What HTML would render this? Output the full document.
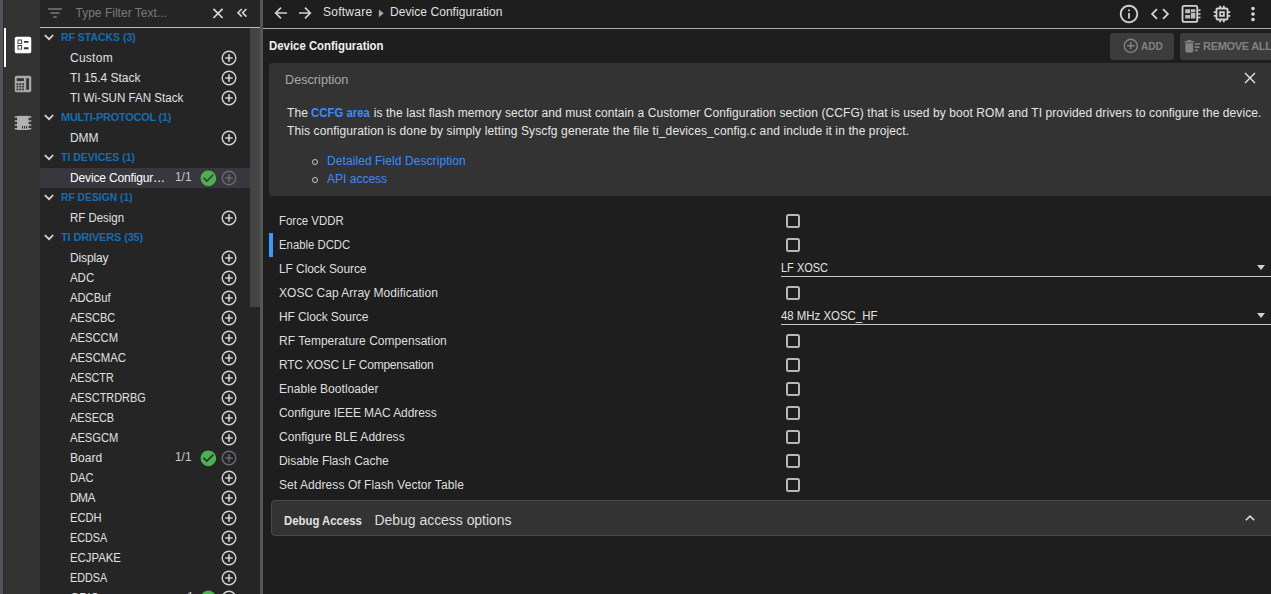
<!DOCTYPE html>
<html lang="en"><head><meta charset="utf-8"><title>Device Configuration</title>
<style>
*{box-sizing:border-box;margin:0;padding:0}
html,body{width:1271px;height:594px;overflow:hidden;background:#1e1e1e}
body{font-family:"Liberation Sans",sans-serif;font-size:12px;color:#e0e0e0;position:relative}
.abs{position:absolute}
#strip{left:0;top:0;width:3px;height:594px;background:#505458}
#strip2{left:3px;top:0;width:1px;height:594px;background:#2b2b2b}
#ibar{left:4px;top:0;width:36px;height:594px;background:#333}
#ind{left:4px;top:28px;width:2px;height:39px;background:#fff}
#nav{left:40px;top:0;width:220px;height:594px;background:#252526;overflow:hidden}
#navhead{left:0;top:0;width:220px;height:28px;border-bottom:1px solid #bdbdbd}
#filtertxt{left:35.5px;top:0;line-height:26px;color:#7a7a7a;font-size:12px;white-space:nowrap}
#tree{left:0;top:28px;width:210px}
.row{height:20px;line-height:20px;position:relative;white-space:nowrap}
.row.sel{background:#37373d}
.cl{position:absolute;left:21px;top:-1px;font-weight:bold;font-size:11px;color:#186cb0}
.il{position:absolute;left:30px;top:0;color:#e0e0e0}
.il.w{color:#fff}
.chev{position:absolute;left:4.3px;top:6.3px;width:10px;height:7px}
.plus{position:absolute;left:181px;top:1.9px;width:16px;height:16px;color:#d4d4d4}
.dim .plus{color:#6a6a6e}
.ok{position:absolute;left:158.74px;top:0.54px;width:18.72px;height:18.72px}
.cnt{position:absolute;left:135.200px;top:-1.5px;color:#c8c8c8}
#thumb{left:210px;top:28px;width:10px;height:279px;background:#444}
#divider{left:260px;top:0;width:3px;height:594px;background:#555}
#main{left:263px;top:0;width:1008px;height:594px;background:#1e1e1e;overflow:hidden}
#topbar{left:0;top:0;width:1008px;height:29px;border-bottom:1px solid #ababab}
.crumb{top:0;line-height:24px;white-space:nowrap;color:#e0e0e0}
#title{left:6px;top:33px;line-height:26px;font-weight:bold;color:#f0f0f0;white-space:nowrap}
.btn{top:33px;height:26.8px;background:#3c3c3c;border-radius:3px;color:#828282;font-weight:bold;font-size:11px;line-height:26px;white-space:nowrap}
#card{left:6px;top:63px;width:1010px;height:133px;background:#333;border-radius:4px}
#desc{left:16px;top:5px;line-height:24px;color:#a8a8a8}
.p{left:18px;white-space:nowrap;line-height:18px;color:#e6e6e6}
a{color:#3d8bff;text-decoration:none}
.li{left:58px;white-space:nowrap;line-height:18px}
.bul{left:42.800px;width:6px;height:6px;border:1.300px solid #c8c8c8;border-radius:50%}
#fields{left:6px;top:209px;width:1002px}
.f{height:24px;line-height:24px;position:relative;white-space:nowrap}
.fl{position:absolute;left:10px;top:0;color:#dedede}
.mark{position:absolute;left:0;top:0;width:4px;height:24px;background:#3b99fc}
.cb{position:absolute;left:517px;top:5px;width:14px;height:14px;border:2px solid #b8b8b8;border-radius:2.5px}
.selbox{position:absolute;left:512px;top:0;width:496px;height:20px;border-bottom:1px solid #c8c8c8}
.selbox span{position:absolute;left:0;top:-1px;color:#e4e4e4}
.tri{position:absolute;left:476px;top:7.800px;width:0;height:0;border-left:4.900px solid transparent;border-right:4.900px solid transparent;border-top:5.300px solid #d0d0d0}
#dbg{left:8px;top:500px;width:1010px;height:36px;background:#333;border:1px solid #4a4a4a;border-radius:4px}
</style></head><body>
<div id="strip" class="abs"></div><div id="strip2" class="abs"></div>
<div id="ibar" class="abs"></div>
<div id="ind" class="abs"></div>
<!-- icon bar icons -->
<svg class="abs" style="left:12px;top:33.75px;width:22px;height:22px" viewBox="0 0 24 24"><path fill="#fff" fill-rule="evenodd" d="M13 9.5h5v-2h-5v2zm0 7h5v-2h-5v2zm6 4.500H5c-1.100 0-2-.9-2-2V5c0-1.100.9-2 2-2h14c1.100 0 2 .9 2 2v14c0 1.100-.9 2-2 2zM6 11h5V6H6v5zm1-4h3v3H7V7zm-1 10h5v-5H6v5zm1-4h3v3H7v-3z"/></svg>
<svg class="abs" style="left:12px;top:73px;width:22px;height:22px" viewBox="0 0 24 24"><path fill="#a8a8a8" fill-rule="evenodd" d="M5 3h14a2 2 0 0 1 2 2v14a2 2 0 0 1-2 2H5a2 2 0 0 1-2-2V5a2 2 0 0 1 2-2zM5.200 5.600v3h7.800v-3zM15.500 5.600v12.800h3V5.600zM5 11.200v1.900h2v-1.900zM8 11.200v1.900h2v-1.900zM11 11.200v1.900h2v-1.900zM5 14v1.900h2V14zM8 14v1.900h2V14zM11 14v1.900h2V14zM5 16.800v1.900h2v-1.900zM8 16.800v1.900h2v-1.900zM11 16.800v1.900h2v-1.900z"/></svg>
<svg class="abs" style="left:12px;top:112px;width:22px;height:22px" viewBox="0 0 24 24"><path fill="#b2b2b2" d="M5.600 4.200h12.500v15.400H5.600z"/><path stroke="#b2b2b2" stroke-width="1.600" d="M3 5.500h18M3 9.800h18M3 14.100h18M3 18.200h18"/><path stroke="#2a2a2a" stroke-width="1.100" d="M11.500 15.300v2.800M13.750 15.300v2.800M15.900 15.300v2.800"/></svg>

<div id="nav" class="abs">
 <div id="navhead" class="abs"></div>
 <svg class="abs" style="left:8px;top:7.500px;width:14px;height:10px" viewBox="0 0 14 10"><path stroke="#7a7a7a" stroke-width="1.300" d="M0 1h14M2.500 5h9M5.300 9h3.400"/></svg>
 <div id="filtertxt" class="abs"><span id="t46" style="letter-spacing:0.011px;margin-left:0.00px">Type Filter Text...</span></div>
 <svg class="abs" style="left:172px;top:7.500px;width:12px;height:11px" viewBox="0 0 12 11"><path stroke="#d8d8d8" stroke-width="1.700" fill="none" d="M1.400 0.800l9.200 9.200M10.600 0.800l-9.200 9.200"/></svg>
 <svg class="abs" style="left:196px;top:8.200px;width:12px;height:10px" viewBox="0 0 12 10"><path stroke="#d8d8d8" stroke-width="1.600" fill="none" d="M5.800 1L2 4.800l3.800 3.800M10.400 1L6.600 4.800l3.800 3.800"/></svg>
 <div id="tree" class="abs">
<div class="row cat"><svg class="chev" viewBox="0 0 10 7"><path d="M0.800 1l4.200 4.200L9.200 1" fill="none" stroke="#d8d8d8" stroke-width="1.700"/></svg><span id="t1" class="cl" style="display:inline-block;transform-origin:0 50%;transform:scaleX(0.9513);margin-left:0.00px">RF STACKS (3)</span></div>
<div class="row"><span id="t2" class="il" style="letter-spacing:0.260px;margin-left:0.00px">Custom</span><svg class="plus" viewBox="0 0 16 16"><circle cx="8" cy="8" r="6.800" fill="none" stroke="currentColor" stroke-width="1.400"/><path d="M8 4.300v7.400M4.300 8h7.400" stroke="currentColor" stroke-width="1.600" fill="none"/></svg></div>
<div class="row"><span id="t3" class="il" style="letter-spacing:-0.017px;margin-left:0.00px">TI 15.4 Stack</span><svg class="plus" viewBox="0 0 16 16"><circle cx="8" cy="8" r="6.800" fill="none" stroke="currentColor" stroke-width="1.400"/><path d="M8 4.300v7.400M4.300 8h7.400" stroke="currentColor" stroke-width="1.600" fill="none"/></svg></div>
<div class="row"><span id="t4" class="il" style="display:inline-block;transform-origin:0 50%;transform:scaleX(0.9653);margin-left:0.00px">TI Wi-SUN FAN Stack</span><svg class="plus" viewBox="0 0 16 16"><circle cx="8" cy="8" r="6.800" fill="none" stroke="currentColor" stroke-width="1.400"/><path d="M8 4.300v7.400M4.300 8h7.400" stroke="currentColor" stroke-width="1.600" fill="none"/></svg></div>
<div class="row cat"><svg class="chev" viewBox="0 0 10 7"><path d="M0.800 1l4.200 4.200L9.200 1" fill="none" stroke="#d8d8d8" stroke-width="1.700"/></svg><span id="t5" class="cl" style="letter-spacing:-0.259px;margin-left:0.00px">MULTI-PROTOCOL (1)</span></div>
<div class="row"><span id="t6" class="il" style="letter-spacing:-0.050px;margin-left:0.00px">DMM</span><svg class="plus" viewBox="0 0 16 16"><circle cx="8" cy="8" r="6.800" fill="none" stroke="currentColor" stroke-width="1.400"/><path d="M8 4.300v7.400M4.300 8h7.400" stroke="currentColor" stroke-width="1.600" fill="none"/></svg></div>
<div class="row cat"><svg class="chev" viewBox="0 0 10 7"><path d="M0.800 1l4.200 4.200L9.200 1" fill="none" stroke="#d8d8d8" stroke-width="1.700"/></svg><span id="t7" class="cl" style="display:inline-block;transform-origin:0 50%;transform:scaleX(0.9533);margin-left:0.00px">TI DEVICES (1)</span></div>
<div class="row sel"><span id="t8" class="il w" style="letter-spacing:-0.153px;margin-left:0.00px">Device Configur…</span><span id="t9" class="cnt" style="display:inline-block;transform-origin:0 50%;transform:scaleX(0.9893);margin-left:0.00px">1/1</span><svg class="ok" viewBox="0 0 24 24"><path fill="#4caf50" d="M12 2C6.480 2 2 6.480 2 12s4.480 10 10 10 10-4.480 10-10S17.520 2 12 2zm-2 15l-5-5 1.410-1.410L10 14.170l7.590-7.590L19 8l-9 9z"/></svg><span class="dim"><svg class="plus" viewBox="0 0 16 16"><circle cx="8" cy="8" r="6.800" fill="none" stroke="currentColor" stroke-width="1.400"/><path d="M8 4.300v7.400M4.300 8h7.400" stroke="currentColor" stroke-width="1.600" fill="none"/></svg></span></div>
<div class="row cat"><svg class="chev" viewBox="0 0 10 7"><path d="M0.800 1l4.200 4.200L9.200 1" fill="none" stroke="#d8d8d8" stroke-width="1.700"/></svg><span id="t10" class="cl" style="display:inline-block;transform-origin:0 50%;transform:scaleX(0.9369);margin-left:0.00px">RF DESIGN (1)</span></div>
<div class="row"><span id="t11" class="il" style="display:inline-block;transform-origin:0 50%;transform:scaleX(0.9526);margin-left:0.00px">RF Design</span><svg class="plus" viewBox="0 0 16 16"><circle cx="8" cy="8" r="6.800" fill="none" stroke="currentColor" stroke-width="1.400"/><path d="M8 4.300v7.400M4.300 8h7.400" stroke="currentColor" stroke-width="1.600" fill="none"/></svg></div>
<div class="row cat"><svg class="chev" viewBox="0 0 10 7"><path d="M0.800 1l4.200 4.200L9.200 1" fill="none" stroke="#d8d8d8" stroke-width="1.700"/></svg><span id="t12" class="cl" style="letter-spacing:-0.150px;margin-left:0.00px">TI DRIVERS (35)</span></div>
<div class="row"><span id="t13" class="il" style="letter-spacing:-0.150px;margin-left:0.00px">Display</span><svg class="plus" viewBox="0 0 16 16"><circle cx="8" cy="8" r="6.800" fill="none" stroke="currentColor" stroke-width="1.400"/><path d="M8 4.300v7.400M4.300 8h7.400" stroke="currentColor" stroke-width="1.600" fill="none"/></svg></div>
<div class="row"><span id="t14" class="il" style="display:inline-block;transform-origin:0 50%;transform:scaleX(0.9525);margin-left:0.00px">ADC</span><svg class="plus" viewBox="0 0 16 16"><circle cx="8" cy="8" r="6.800" fill="none" stroke="currentColor" stroke-width="1.400"/><path d="M8 4.300v7.400M4.300 8h7.400" stroke="currentColor" stroke-width="1.600" fill="none"/></svg></div>
<div class="row"><span id="t15" class="il" style="display:inline-block;transform-origin:0 50%;transform:scaleX(0.9342);margin-left:0.00px">ADCBuf</span><svg class="plus" viewBox="0 0 16 16"><circle cx="8" cy="8" r="6.800" fill="none" stroke="currentColor" stroke-width="1.400"/><path d="M8 4.300v7.400M4.300 8h7.400" stroke="currentColor" stroke-width="1.600" fill="none"/></svg></div>
<div class="row"><span id="t16" class="il" style="display:inline-block;transform-origin:0 50%;transform:scaleX(0.9184);margin-left:0.00px">AESCBC</span><svg class="plus" viewBox="0 0 16 16"><circle cx="8" cy="8" r="6.800" fill="none" stroke="currentColor" stroke-width="1.400"/><path d="M8 4.300v7.400M4.300 8h7.400" stroke="currentColor" stroke-width="1.600" fill="none"/></svg></div>
<div class="row"><span id="t17" class="il" style="display:inline-block;transform-origin:0 50%;transform:scaleX(0.9353);margin-left:0.00px">AESCCM</span><svg class="plus" viewBox="0 0 16 16"><circle cx="8" cy="8" r="6.800" fill="none" stroke="currentColor" stroke-width="1.400"/><path d="M8 4.300v7.400M4.300 8h7.400" stroke="currentColor" stroke-width="1.600" fill="none"/></svg></div>
<div class="row"><span id="t18" class="il" style="display:inline-block;transform-origin:0 50%;transform:scaleX(0.9441);margin-left:0.00px">AESCMAC</span><svg class="plus" viewBox="0 0 16 16"><circle cx="8" cy="8" r="6.800" fill="none" stroke="currentColor" stroke-width="1.400"/><path d="M8 4.300v7.400M4.300 8h7.400" stroke="currentColor" stroke-width="1.600" fill="none"/></svg></div>
<div class="row"><span id="t19" class="il" style="display:inline-block;transform-origin:0 50%;transform:scaleX(0.8980);margin-left:0.00px">AESCTR</span><svg class="plus" viewBox="0 0 16 16"><circle cx="8" cy="8" r="6.800" fill="none" stroke="currentColor" stroke-width="1.400"/><path d="M8 4.300v7.400M4.300 8h7.400" stroke="currentColor" stroke-width="1.600" fill="none"/></svg></div>
<div class="row"><span id="t20" class="il" style="display:inline-block;transform-origin:0 50%;transform:scaleX(0.9072);margin-left:0.00px">AESCTRDRBG</span><svg class="plus" viewBox="0 0 16 16"><circle cx="8" cy="8" r="6.800" fill="none" stroke="currentColor" stroke-width="1.400"/><path d="M8 4.300v7.400M4.300 8h7.400" stroke="currentColor" stroke-width="1.600" fill="none"/></svg></div>
<div class="row"><span id="t21" class="il" style="display:inline-block;transform-origin:0 50%;transform:scaleX(0.9064);margin-left:0.00px">AESECB</span><svg class="plus" viewBox="0 0 16 16"><circle cx="8" cy="8" r="6.800" fill="none" stroke="currentColor" stroke-width="1.400"/><path d="M8 4.300v7.400M4.300 8h7.400" stroke="currentColor" stroke-width="1.600" fill="none"/></svg></div>
<div class="row"><span id="t22" class="il" style="display:inline-block;transform-origin:0 50%;transform:scaleX(0.9289);margin-left:0.00px">AESGCM</span><svg class="plus" viewBox="0 0 16 16"><circle cx="8" cy="8" r="6.800" fill="none" stroke="currentColor" stroke-width="1.400"/><path d="M8 4.300v7.400M4.300 8h7.400" stroke="currentColor" stroke-width="1.600" fill="none"/></svg></div>
<div class="row"><span id="t23" class="il" style="letter-spacing:0.025px;margin-left:0.00px">Board</span><span id="t24" class="cnt" style="display:inline-block;transform-origin:0 50%;transform:scaleX(0.9893);margin-left:0.00px">1/1</span><svg class="ok" viewBox="0 0 24 24"><path fill="#4caf50" d="M12 2C6.480 2 2 6.480 2 12s4.480 10 10 10 10-4.480 10-10S17.520 2 12 2zm-2 15l-5-5 1.410-1.410L10 14.170l7.590-7.590L19 8l-9 9z"/></svg><span class="dim"><svg class="plus" viewBox="0 0 16 16"><circle cx="8" cy="8" r="6.800" fill="none" stroke="currentColor" stroke-width="1.400"/><path d="M8 4.300v7.400M4.300 8h7.400" stroke="currentColor" stroke-width="1.600" fill="none"/></svg></span></div>
<div class="row"><span id="t25" class="il" style="display:inline-block;transform-origin:0 50%;transform:scaleX(0.9285);margin-left:0.00px">DAC</span><svg class="plus" viewBox="0 0 16 16"><circle cx="8" cy="8" r="6.800" fill="none" stroke="currentColor" stroke-width="1.400"/><path d="M8 4.300v7.400M4.300 8h7.400" stroke="currentColor" stroke-width="1.600" fill="none"/></svg></div>
<div class="row"><span id="t26" class="il" style="letter-spacing:-0.550px;margin-left:0.00px">DMA</span><svg class="plus" viewBox="0 0 16 16"><circle cx="8" cy="8" r="6.800" fill="none" stroke="currentColor" stroke-width="1.400"/><path d="M8 4.300v7.400M4.300 8h7.400" stroke="currentColor" stroke-width="1.600" fill="none"/></svg></div>
<div class="row"><span id="t27" class="il" style="display:inline-block;transform-origin:0 50%;transform:scaleX(0.9295);margin-left:0.00px">ECDH</span><svg class="plus" viewBox="0 0 16 16"><circle cx="8" cy="8" r="6.800" fill="none" stroke="currentColor" stroke-width="1.400"/><path d="M8 4.300v7.400M4.300 8h7.400" stroke="currentColor" stroke-width="1.600" fill="none"/></svg></div>
<div class="row"><span id="t28" class="il" style="display:inline-block;transform-origin:0 50%;transform:scaleX(0.9002);margin-left:0.00px">ECDSA</span><svg class="plus" viewBox="0 0 16 16"><circle cx="8" cy="8" r="6.800" fill="none" stroke="currentColor" stroke-width="1.400"/><path d="M8 4.300v7.400M4.300 8h7.400" stroke="currentColor" stroke-width="1.600" fill="none"/></svg></div>
<div class="row"><span id="t29" class="il" style="display:inline-block;transform-origin:0 50%;transform:scaleX(0.9464);margin-left:0.00px">ECJPAKE</span><svg class="plus" viewBox="0 0 16 16"><circle cx="8" cy="8" r="6.800" fill="none" stroke="currentColor" stroke-width="1.400"/><path d="M8 4.300v7.400M4.300 8h7.400" stroke="currentColor" stroke-width="1.600" fill="none"/></svg></div>
<div class="row"><span id="t30" class="il" style="display:inline-block;transform-origin:0 50%;transform:scaleX(0.9002);margin-left:0.00px">EDDSA</span><svg class="plus" viewBox="0 0 16 16"><circle cx="8" cy="8" r="6.800" fill="none" stroke="currentColor" stroke-width="1.400"/><path d="M8 4.300v7.400M4.300 8h7.400" stroke="currentColor" stroke-width="1.600" fill="none"/></svg></div>
<div class="row"><span id="t31" class="il" style="letter-spacing:-0.100px;margin-left:0.00px">GPIO</span><span class="cnt" style="left:147px">1</span><svg class="ok" viewBox="0 0 24 24"><path fill="#4caf50" d="M12 2C6.480 2 2 6.480 2 12s4.480 10 10 10 10-4.480 10-10S17.520 2 12 2zm-2 15l-5-5 1.410-1.410L10 14.170l7.590-7.590L19 8l-9 9z"/></svg><svg class="plus" viewBox="0 0 16 16"><circle cx="8" cy="8" r="6.800" fill="none" stroke="currentColor" stroke-width="1.400"/><path d="M8 4.300v7.400M4.300 8h7.400" stroke="currentColor" stroke-width="1.600" fill="none"/></svg></div>
 </div>
 <div id="thumb" class="abs"></div>
</div>
<div id="divider" class="abs"></div>

<div id="main" class="abs">
 <div id="topbar" class="abs"></div>
 <svg class="abs" style="left:11px;top:6px;width:14px;height:14px" viewBox="0 0 14 14"><path stroke="#d2d2d2" stroke-width="1.700" fill="none" d="M13 7H2M7 1.700L1.700 7 7 12.300"/></svg>
 <svg class="abs" style="left:35px;top:6px;width:14px;height:14px" viewBox="0 0 14 14"><path stroke="#d2d2d2" stroke-width="1.700" fill="none" d="M1 7h11M7 1.700L12.300 7 7 12.300"/></svg>
 <div class="abs crumb" style="left:60px"><span id="t47" style="letter-spacing:0.243px;margin-left:0.00px">Software</span></div>
 <svg class="abs" style="left:115px;top:9px;width:7px;height:9px" viewBox="0 0 7 9"><path fill="#a6a6a6" d="M0.900 0.400L5.700 4.300 0.900 8.200z"/></svg>
 <div class="abs crumb" style="left:127px"><span id="t48" style="letter-spacing:0.058px;margin-left:0.00px">Device Configuration</span></div>

 <!-- top right icons -->
 <svg class="abs" style="left:855px;top:2.900px;width:22px;height:22px" viewBox="0 0 24 24"><path fill="#d2d2d2" d="M11 17h2v-6h-2v6zm1-15C6.480 2 2 6.480 2 12s4.480 10 10 10 10-4.480 10-10S17.520 2 12 2zm0 18c-4.410 0-8-3.590-8-8s3.590-8 8-8 8 3.590 8 8-3.590 8-8 8zM11 9h2V7h-2v2z"/></svg>
 <svg class="abs" style="left:886px;top:2.900px;width:22px;height:22px" viewBox="0 0 24 24"><path fill="#d2d2d2" d="M9.400 16.600L4.800 12l4.600-4.600L8 6l-6 6 6 6 1.400-1.400zm5.200 0l4.600-4.600-4.600-4.600L16 6l6 6-6 6-1.400-1.400z"/></svg>
 <svg class="abs" style="left:917px;top:2.900px;width:22px;height:22px" viewBox="0 0 24 24"><rect x="2.750" y="3.100" width="16.100" height="17.400" rx="1.800" fill="none" stroke="#d2d2d2" stroke-width="2"/><path fill="#bcbcbc" d="M5.700 6.800h5.400v4.500H5.700zM5.700 13.200h5.400v3.700H5.700zM11.900 6.800h4.800v3.200h-4.800zM11.900 10.900h4.800v6h-4.800z"/><path stroke="#d2d2d2" stroke-width="1.600" d="M19.800 8h2.600M19.800 12h2.600M19.800 15.800h2.600"/></svg>
 <svg class="abs" style="left:948px;top:2.900px;width:22px;height:22px" viewBox="0 0 24 24"><path fill="#d2d2d2" d="M15 9H9v6h6V9zm-2 4h-2v-2h2v2zm8-2V9h-2V7c0-1.100-.9-2-2-2h-2V3h-2v2h-2V3H9v2H7c-1.100 0-2 .9-2 2v2H3v2h2v2H3v2h2v2c0 1.100.9 2 2 2h2v2h2v-2h2v2h2v-2h2c1.100 0 2-.9 2-2v-2h2v-2h-2v-2h2zm-4 6H7V7h10v10z"/></svg>
 <svg class="abs" style="left:979px;top:2.900px;width:22px;height:22px" viewBox="0 0 24 24"><path fill="#d2d2d2" d="M12 8c1.100 0 2-.9 2-2s-.9-2-2-2-2 .9-2 2 .9 2 2 2zm0 2c-1.100 0-2 .9-2 2s.9 2 2 2 2-.9 2-2-.9-2-2-2zm0 6c-1.100 0-2 .9-2 2s.9 2 2 2 2-.9 2-2-.9-2-2-2z"/></svg>

 <div id="title" class="abs"><span id="t49" style="display:inline-block;transform-origin:0 50%;transform:scaleX(0.9488);margin-left:0.00px">Device Configuration</span></div>
 <div class="abs btn" style="left:847px;width:64px"><svg class="abs" style="left:13.100px;top:5.200px;width:15.600px;height:15.600px" viewBox="0 0 16 16"><circle cx="8" cy="8" r="6.700" fill="none" stroke="#828282" stroke-width="1.400"/><path d="M8 4.400v7.200M4.400 8h7.200" stroke="#828282" stroke-width="1.500"/></svg><span class="abs" style="left:31px;top:0"><span id="t50" style="display:inline-block;transform-origin:0 50%;transform:scaleX(0.9167);margin-left:0.00px">ADD</span></span></div>
 <div class="abs btn" style="left:917px;width:110px"><svg class="abs" style="left:2.700px;top:3.900px;width:18.720px;height:18.720px" viewBox="0 0 24 24"><path fill="#828282" d="M15 16h4v2h-4zm0-8h7v2h-7zm0 4h6v2h-6zM3 18c0 1.100.9 2 2 2h6c1.100 0 2-.9 2-2V8H3v10zM14 5h-3l-1-1H6L5 5H2v2h12z"/></svg><span class="abs" style="left:23px;top:0;letter-spacing:-0.3px">REMOVE ALL</span></div>

 <div id="card" class="abs">
  <div id="desc" class="abs"><span id="t51" style="display:inline-block;transform-origin:0 50%;transform:scaleX(1.0554);margin-left:0.00px">Description</span></div>
  <svg class="abs" style="left:975px;top:9px;width:12px;height:12px" viewBox="0 0 12 12"><path stroke="#e6e6e6" stroke-width="1.400" d="M1 1l10 10M11 1L1 11"/></svg>
  <div class="abs p" style="top:41px"><span id="t52" style="letter-spacing:0.075px;margin-left:0.00px">The <a href="#"><b style="display:inline-block;transform:scaleX(0.940);transform-origin:0 50%;margin-right:-3.700px">CCFG area</b></a> is the last flash memory sector and must contain a Customer Configuration section (CCFG) that is used by boot ROM and TI provided drivers to configure the device.</span></div>
  <div class="abs p" style="top:59px"><span id="t53" style="letter-spacing:0.115px;margin-left:0.00px">This configuration is done by simply letting Syscfg generate the file ti_devices_config.c and include it in the project.</span></div>
  <i class="abs bul" style="top:96px"></i><div class="abs li" style="top:89px"><a href="#"><span id="t54" style="letter-spacing:0.080px;margin-left:0.00px">Detailed Field Description</span></a></div>
  <i class="abs bul" style="top:114px"></i><div class="abs li" style="top:107px"><a href="#"><span id="t55" style="letter-spacing:0.011px;margin-left:0.00px">API access</span></a></div>
 </div>

 <div id="fields" class="abs">
<div class="f"><span id="t32" class="fl" style="display:inline-block;transform-origin:0 50%;transform:scaleX(0.9515);margin-left:0.00px">Force VDDR</span><i class="cb"></i></div>
<div class="f"><i class="mark"></i><span id="t33" class="fl" style="display:inline-block;transform-origin:0 50%;transform:scaleX(0.9454);margin-left:0.00px">Enable DCDC</span><i class="cb"></i></div>
<div class="f"><span id="t35" class="fl" style="letter-spacing:-0.086px;margin-left:0.00px">LF Clock Source</span><div class="selbox"><span id="t34" style="display:inline-block;transform-origin:0 50%;transform:scaleX(0.9157);margin-left:0.00px">LF XOSC</span><i class="tri"></i></div></div>
<div class="f"><span id="t36" class="fl" style="letter-spacing:0.031px;margin-left:0.00px">XOSC Cap Array Modification</span><i class="cb"></i></div>
<div class="f"><span id="t38" class="fl" style="letter-spacing:-0.093px;margin-left:0.00px">HF Clock Source</span><div class="selbox"><span id="t37" style="display:inline-block;transform-origin:0 50%;transform:scaleX(0.9510);margin-left:0.00px">48 MHz XOSC_HF</span><i class="tri"></i></div></div>
<div class="f"><span id="t39" class="fl" style="letter-spacing:0.023px;margin-left:0.00px">RF Temperature Compensation</span><i class="cb"></i></div>
<div class="f"><span id="t40" class="fl" style="letter-spacing:-0.226px;margin-left:0.00px">RTC XOSC LF Compensation</span><i class="cb"></i></div>
<div class="f"><span id="t41" class="fl" style="letter-spacing:0.050px;margin-left:0.00px">Enable Bootloader</span><i class="cb"></i></div>
<div class="f"><span id="t42" class="fl" style="letter-spacing:-0.064px;margin-left:0.00px">Configure IEEE MAC Address</span><i class="cb"></i></div>
<div class="f"><span id="t43" class="fl" style="letter-spacing:0.045px;margin-left:0.00px">Configure BLE Address</span><i class="cb"></i></div>
<div class="f"><span id="t44" class="fl" style="letter-spacing:-0.056px;margin-left:0.00px">Disable Flash Cache</span><i class="cb"></i></div>
<div class="f"><span id="t45" class="fl" style="letter-spacing:0.072px;margin-left:0.00px">Set Address Of Flash Vector Table</span><i class="cb"></i></div>
 </div>

 <div id="dbg" class="abs">
  <span class="abs" style="left:12px;top:5.400px;line-height:30px;font-weight:bold;color:#e2e2e2;white-space:nowrap"><span id="t56" style="display:inline-block;transform-origin:0 50%;transform:scaleX(0.9464);margin-left:0.00px">Debug Access</span></span>
  <span class="abs" style="left:102.500px;top:3.700px;line-height:30px;font-size:14px;color:#dcdcdc;white-space:nowrap"><span id="t57" style="letter-spacing:-0.037px;margin-left:0.00px">Debug access options</span></span>
  <svg class="abs" style="left:972.500px;top:13px;width:10px;height:8px" viewBox="0 0 10 8"><path stroke="#dcdcdc" stroke-width="1.600" fill="none" d="M0.800 6.300L5 2.100 9.200 6.300"/></svg>
 </div>
</div>
</body></html>
